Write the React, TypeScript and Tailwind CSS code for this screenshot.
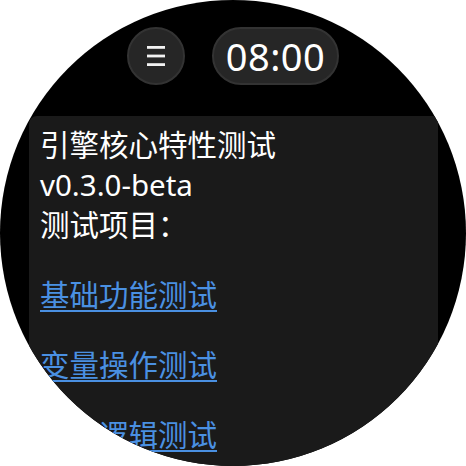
const TESTS = ["基础功能测试", "变量操作测试", "条件逻辑测试"]

function MenuIcon() {
  return (
    <svg width="20" height="20" viewBox="0 0 20 20" className="block">
      <rect x="1" y="0" width="18" height="2.8" fill="#f2f2f2" />
      <rect x="1" y="8.6" width="18" height="2.8" fill="#f2f2f2" />
      <rect x="1" y="17.2" width="18" height="2.8" fill="#f2f2f2" />
    </svg>
  )
}

export default function App() {
  return (
    <div className="h-[466px] w-[466px] bg-white">
      <div
        className="h-[466px] w-[466px] overflow-hidden rounded-full bg-black text-white"
        style={{ fontFamily: '"Noto Sans", "Noto Sans CJK SC", sans-serif' }}
      >
        {/* Top bar */}
        <div className="flex justify-center gap-[27px] pt-[27px]">
          <div className="flex size-[58px] items-center justify-center rounded-full border-2 border-[#333333] bg-[#262626]">
            <MenuIcon />
          </div>
          <div className="flex h-[58px] items-center rounded-full border-2 border-[#333333] bg-[#262626] px-[12px]">
            <span className="text-[38px] leading-none tracking-[0.5px]">08:00</span>
          </div>
        </div>

        {/* Content */}
        <div className="mt-[31px] ml-[29px] h-[400px] w-[409px] rounded-tl-lg bg-[#1a1a1a] pt-[9px] pl-[11px]">
          <div className="text-[29.5px] leading-[40px]">
            <p>引擎核心特性测试</p>
            <p>v0.3.0-beta</p>
            <p>测试项目：</p>
          </div>
          {TESTS.map((t) => (
            <a
              key={t}
              href="#"
              className="mt-[30px] block w-fit text-[29.5px] leading-[40px] text-[#4a90e2] underline decoration-[1.5px] underline-offset-[4px]"
            >
              {t}
            </a>
          ))}
        </div>
      </div>
    </div>
  )
}
